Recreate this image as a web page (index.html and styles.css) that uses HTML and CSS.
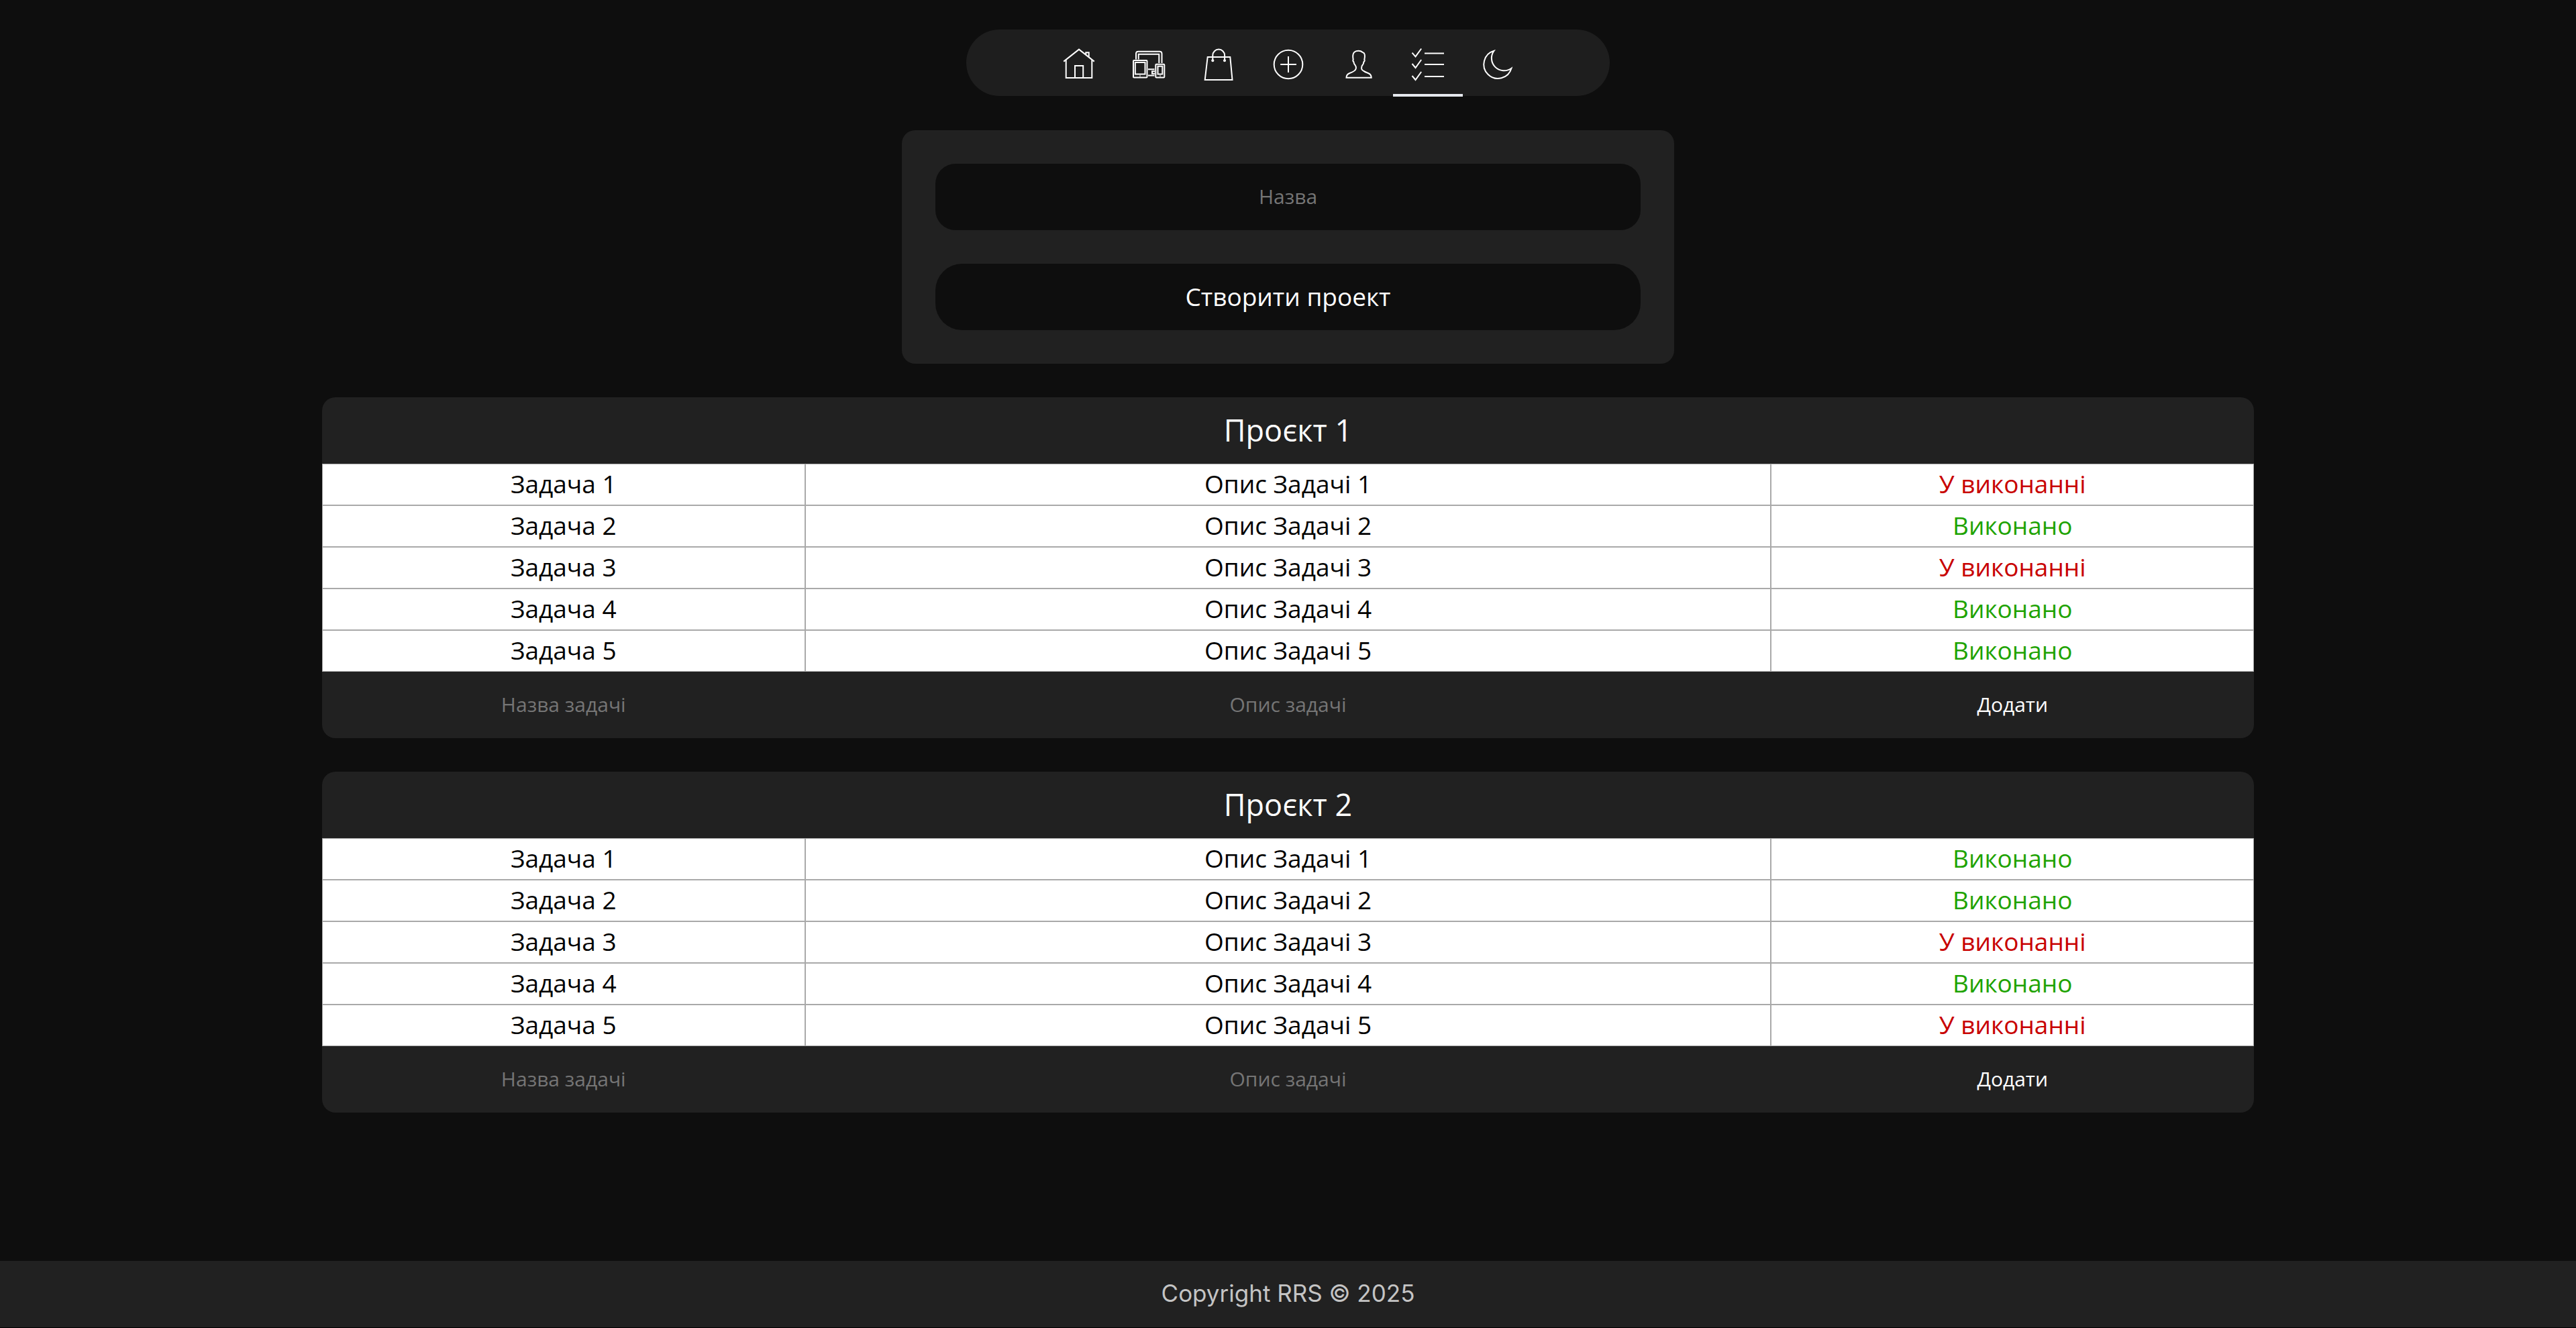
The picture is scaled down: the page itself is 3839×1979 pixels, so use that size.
FILE: index.html
```html
<!DOCTYPE html>
<html lang="uk">
<head>
<meta charset="utf-8">
<meta name="viewport" content="width=device-width, initial-scale=1">
<title>Проєкти</title>
<link rel="stylesheet" href="styles.css">
</head>
<body>
<header class="header">
  <nav class="nav">
    <a class="nav-link" href="#home" aria-label="Головна"><svg class="icon" viewBox="0 0 48 48"><path d="M1.2 19.6 24 1.6l22.800 18M4.700 17.500V44H43.300V17.500M18 44V26H30.200V44M34.300 9.500V6.300H38.700V13"/></svg></a>
    <a class="nav-link" href="#devices" aria-label="Пристрої"><svg class="icon" viewBox="0 0 48 48"><path d="M5 16.500V8Q5 4.700 8.300 4.700H40.200Q43.500 4.700 43.500 8V22M8.700 16.500V8.700H39.300V22M23 31.300H32.500M23 40.400H32.500M33 34.300H29V37.700H33"/><rect x="1" y="18" width="20.500" height="25.500" rx="1"/><rect x="3.800" y="21" width="14.700" height="17.500"/><rect x="34.300" y="23.700" width="13" height="19.800" rx="1"/><rect x="37.500" y="26.700" width="6.800" height="11.800"/><path class="thin" d="M11 39V43M41 39V43"/></svg></a>
    <a class="nav-link" href="#shop" aria-label="Магазин"><svg class="icon" viewBox="0 0 48 48"><path d="M7.700 13H41.300L44.500 47H3.700ZM15.300 18V10.500a8.900 8.900 0 0 1 17.800 0V18"/><circle class="dot" cx="15.300" cy="18.300" r="2"/><circle class="dot" cx="33" cy="18.300" r="2"/></svg></a>
    <a class="nav-link" href="#add" aria-label="Додати оголошення"><svg class="icon" viewBox="0 0 48 48"><circle cx="24" cy="24" r="21.300"/><path d="M12.200 24H36M24 12V36"/></svg></a>
    <a class="nav-link" href="#profile" aria-label="Профіль"><svg class="icon" viewBox="0 0 48 48"><path d="M6.500 43.700H43.700C43.700 40 42.500 38.500 39 37C34 35 30.500 34 29.300 31C28.800 28 29 26.500 30.500 25C32 23.500 32.300 22 32.300 20.500C33.500 19.500 34 18 33.300 16.700C34.300 12 34 9 33 7.500C32.200 6.300 31 6 30 5.500C28 3.200 21.500 3.200 19 5.200C16.500 7 15.600 11 16.700 16.700C16 18 16.500 19.500 17.500 20.500C17.500 22 18 23.500 19.500 25C21 27 21.200 29 20.500 31C19.500 34 15.500 35.500 11.500 37C7.500 38.500 6.500 40.500 6.500 43.700Z"/></svg></a>
    <a class="nav-link nav-link-active" href="#tasks" aria-label="Задачі" aria-current="page"><svg class="icon" viewBox="0 0 48 48"><path d="M.5 6.700 5.500 12.300 14.200.5M.5 23 5.500 29 14.200 17M.5 41 5.500 47 14.200 35M19 7.500H48M19 24H48M19 42H48"/></svg></a>
    <a class="nav-link" href="#theme" aria-label="Темна тема"><svg class="icon" viewBox="0 0 48 48"><path d="M18.500 3.700A21 21 0 1 0 44.500 29.700A18.600 18.600 0 0 1 18.500 3.700Z"/></svg></a>
  </nav>
</header>

<main class="main">
  <form class="create">
    <input class="create-input" type="text" placeholder="Назва" aria-label="Назва">
    <button class="create-button" type="button">Створити проект</button>
  </form>

  <section class="project">
    <h2 class="project-title">Проєкт 1</h2>
    <table class="tasks">
      <colgroup><col class="col-side"><col class="col-middle"><col class="col-side"></colgroup>
      <tbody>
        <tr><td>Задача 1</td><td>Опис Задачі 1</td><td class="pending">У виконанні</td></tr>
        <tr><td>Задача 2</td><td>Опис Задачі 2</td><td class="done">Виконано</td></tr>
        <tr><td>Задача 3</td><td>Опис Задачі 3</td><td class="pending">У виконанні</td></tr>
        <tr><td>Задача 4</td><td>Опис Задачі 4</td><td class="done">Виконано</td></tr>
        <tr><td>Задача 5</td><td>Опис Задачі 5</td><td class="done">Виконано</td></tr>
      </tbody>
    </table>
    <form class="add-task">
      <input class="add-input" type="text" placeholder="Назва задачі" aria-label="Назва задачі">
      <input class="add-input" type="text" placeholder="Опис задачі" aria-label="Опис задачі">
      <button class="add-button" type="button">Додати</button>
    </form>
  </section>

  <section class="project">
    <h2 class="project-title">Проєкт 2</h2>
    <table class="tasks">
      <colgroup><col class="col-side"><col class="col-middle"><col class="col-side"></colgroup>
      <tbody>
        <tr><td>Задача 1</td><td>Опис Задачі 1</td><td class="done">Виконано</td></tr>
        <tr><td>Задача 2</td><td>Опис Задачі 2</td><td class="done">Виконано</td></tr>
        <tr><td>Задача 3</td><td>Опис Задачі 3</td><td class="pending">У виконанні</td></tr>
        <tr><td>Задача 4</td><td>Опис Задачі 4</td><td class="done">Виконано</td></tr>
        <tr><td>Задача 5</td><td>Опис Задачі 5</td><td class="pending">У виконанні</td></tr>
      </tbody>
    </table>
    <form class="add-task">
      <input class="add-input" type="text" placeholder="Назва задачі" aria-label="Назва задачі">
      <input class="add-input" type="text" placeholder="Опис задачі" aria-label="Опис задачі">
      <button class="add-button" type="button">Додати</button>
    </form>
  </section>
</main>

<footer class="footer">Copyright RRS © 2025</footer>
</body>
</html>
```

FILE: styles.css
```css
* {
  box-sizing: border-box;
}

body {
  display: flex;
  flex-direction: column;
  min-height: 100vh;
  margin: 0;
  background: #0e0e0e;
  color: #fff;
  font-family: "Open Sans", "Noto Sans", sans-serif;
  font-size: 37px;
}

input,
button {
  margin: 0;
  padding: 0 0 2px;
  border: 0;
  outline: 0;
  color: #fff;
  font-family: inherit;
  text-align: center;
}

input::placeholder {
  color: #757575;
  opacity: 1;
}

.header {
  display: flex;
  justify-content: center;
  padding-top: 44px;
}

.nav {
  display: flex;
  justify-content: center;
  width: 25%;
  min-width: 760px;
  height: 99px;
  border-radius: 50px;
  background: #1e1e1e;
}

.nav-link {
  width: 104px;
  height: 100px;
  padding: 28px 28px 20px;
}

.nav-link-active {
  border-bottom: 4px solid #e5e8ed;
}

.icon {
  display: block;
  width: 48px;
  height: 48px;
  overflow: visible;
  fill: none;
  stroke: #fff;
  stroke-width: 2;
}

.icon .thin {
  stroke: #aaa;
  stroke-width: 1.5;
}

.icon .dot {
  fill: #fff;
  stroke: none;
}

.main {
  display: flex;
  flex: 1;
  flex-direction: column;
  align-items: center;
  gap: 50px;
  padding: 51px 0 50px;
}

.create {
  display: flex;
  flex-direction: column;
  gap: 50px;
  width: 30%;
  min-width: 600px;
  padding: 50px;
  border-radius: 20px;
  background: #212121;
}

.create-input,
.create-button {
  width: 100%;
  height: 99px;
  background: #0e0e0e;
}

.create-input {
  border-radius: 30px;
  font-size: 30px;
}

.create-button {
  border-radius: 40px;
  font-size: 37px;
}

.project {
  width: 75%;
  overflow: hidden;
  border-radius: 20px;
  background: #212121;
}

.project-title {
  margin: 0;
  padding-bottom: 2px;
  font-size: 45px;
  font-weight: 400;
  line-height: 97px;
  text-align: center;
}

.tasks {
  width: 100%;
  border-spacing: 0;
  table-layout: fixed;
  background: #fff;
  color: #000;
  text-align: center;
}

.col-side {
  width: 25%;
}

.col-middle {
  width: 50%;
}

.tasks td {
  height: 62px;
  padding: 0 0 2px;
  border: 1px solid #a9a9a9;
  line-height: 52px;
}

.tasks .pending {
  color: #c80000;
}

.tasks .done {
  color: #1ea300;
}

.add-task {
  display: grid;
  grid-template-columns: 1fr 2fr 1fr;
}

.add-input,
.add-button {
  width: 100%;
  height: 99px;
  background: transparent;
  font-size: 30px;
}

.footer {
  padding-bottom: 2px;
  background: #212121;
  border-bottom: 1px solid #000;
  color: #c4c4c4;
  font-family: Inter, "Open Sans", sans-serif;
  font-size: 35px;
  line-height: 97px;
  text-align: center;
}
```
